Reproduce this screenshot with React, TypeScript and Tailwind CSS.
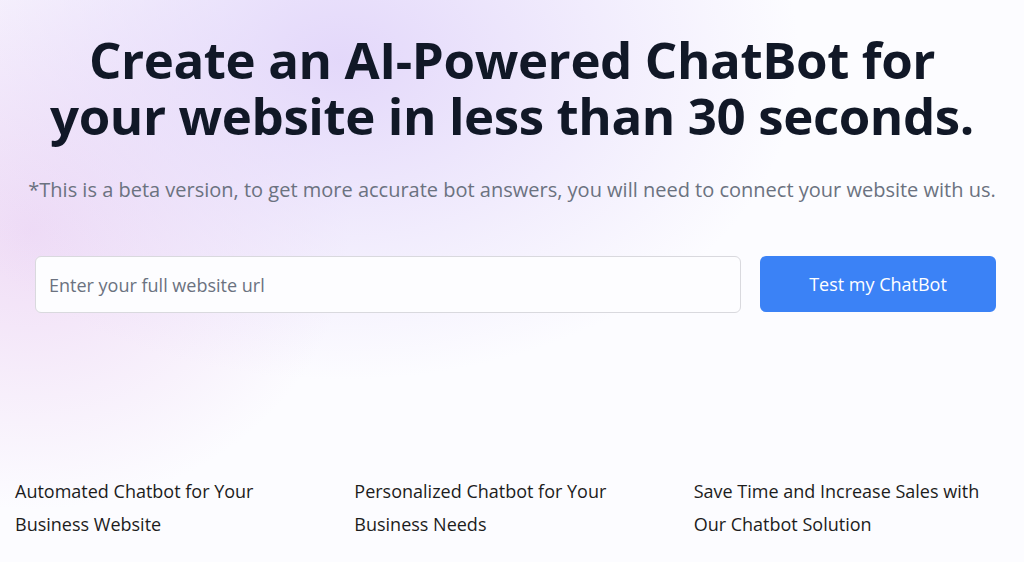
export default function App() {
  const features = [
    "Automated Chatbot for Your Business Website",
    "Personalized Chatbot for Your Business Needs",
    "Save Time and Increase Sales with Our Chatbot Solution",
  ];

  return (
    <div
      className="min-h-[562px] w-full overflow-hidden bg-[#fcfcff] font-['Open_Sans',sans-serif]"
      style={{
        backgroundImage:
          "radial-gradient(ellipse 460px 320px at 340px 60px, rgba(226,214,250,0.95), rgba(226,214,250,0) 100%), radial-gradient(ellipse 320px 280px at 30px 230px, rgba(239,218,245,0.95), rgba(239,218,245,0) 100%)",
      }}
    >
      {/* hero */}
      <div className="flex flex-col items-center pt-[31px]">
        <h1 className="text-center text-[51px] font-bold leading-[56px] tracking-[-0.4px] text-[#111827]">
          Create an AI-Powered ChatBot for
          <br />
          your website in less than 30 seconds.
        </h1>
        <p className="mt-[33px] text-center text-[20px] leading-7 text-[#6b7280]">
          *This is a beta version, to get more accurate bot answers, you will need to connect your website with us.
        </p>
      </div>

      <div className="mt-[52px] flex gap-[19px] pl-[35px] pr-[28px]">
        <input
          type="text"
          placeholder="Enter your full website url"
          className="h-[57px] flex-1 rounded-md border border-[#d9d9de] bg-[#fdfdff] px-[13px] text-[18px] text-[#111827] outline-none placeholder:text-[#6b7280]"
        />
        <button className="h-[56px] w-[236px] rounded-md bg-[#3b82f6] text-[18px] text-white">
          Test my ChatBot
        </button>
      </div>

      {/* features */}
      <div className="mt-[162px] grid grid-cols-3 gap-6 px-[15px]">
        {features.map((f, i) => (
          <p key={i} className="max-w-[290px] text-[18px] leading-[33px] text-[#1c1c1c]">
            {f}
          </p>
        ))}
      </div>
    </div>
  );
}
